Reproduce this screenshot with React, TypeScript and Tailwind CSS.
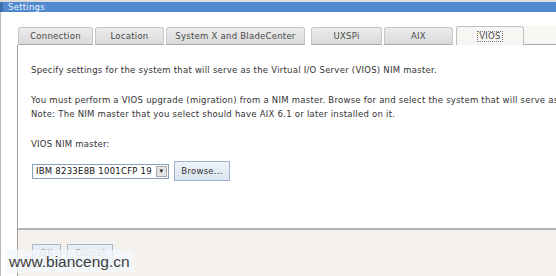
import React from "react";

const tabs = [
  { label: "Connection", w: "w-[75px]" },
  { label: "Location", w: "w-[69px]" },
  { label: "System X and BladeCenter", w: "w-[139px]" },
  { label: "UXSPi", w: "w-[71px]" },
  { label: "AIX", w: "w-[69px]" },
];

export default function App() {
  return (
    <div className="relative flex h-[276px] w-[556px] flex-col overflow-hidden bg-white font-['DejaVu_Sans',sans-serif] text-[8.5px] tracking-[0.25px] text-[#333]">
      <div className="h-[2px] bg-[#dcdcdc]" />
      <div className="flex h-[10px] items-center border-l-[3px] border-[#3d6fae] bg-[#5089d0] pl-[5px] text-[8.5px] leading-none text-[#eef4fb]">
        Settings
      </div>

      <div className="flex flex-1">
        <div className="w-[4px] border-r border-[#b8b8b8] bg-[#ececec]" />
        <div className="flex flex-1 flex-col pl-[16px]">
          <div className="h-[14px]" />

          {/* tab strip */}
          <div className="flex h-[19px] items-end">
            {tabs.map((t, i) => (
              <div
                key={t.label}
                className={`flex h-[18px] ${t.w} ${i === 3 ? "ml-[6px]" : i > 0 ? "ml-[2px]" : "ml-[1px]"} items-center justify-center rounded-t-[3px] border border-b-[#a8a8a8] border-[#c6c6c6] bg-gradient-to-b from-[#ececec] to-[#dadada] text-[8.5px] text-[#4a4a4a]`}
              >
                {t.label}
              </div>
            ))}
            <div className="ml-[3px] flex h-[19px] w-[68px] items-center justify-center rounded-t-[3px] border border-b-0 border-[#c0c0c0] bg-[#f7f6f3] text-[8.5px] text-[#4a4a4a]">
              <span className="border border-dotted border-[#777] px-[1px] leading-[9px]">VIOS</span>
            </div>
            <div className="h-[19px] flex-1 border-b border-[#a8a8a8] bg-[#f8f7f4]" />
          </div>

          {/* panel */}
          <div className="flex flex-1 flex-col border-l border-[#9e9e9e]">
            <div className="h-[183px] overflow-hidden bg-white pl-[13px] pt-[20px]">
              <p className="whitespace-nowrap leading-[10px]">
                Specify settings for the system that will serve as the Virtual I/O Server (VIOS) NIM master.
              </p>
              <p className="mt-[18px] whitespace-nowrap leading-[14px]">
                You must perform a VIOS upgrade (migration) from a NIM master. Browse for and select the system that will serve as the VIOS NIM master.
                <br />
                Note: The NIM master that you select should have AIX 6.1 or later installed on it.
              </p>
              <p className="mt-[18px] leading-[10px]">VIOS NIM master:</p>
              <div className="mt-[12px] flex items-center gap-[5px]">
                <div className="ml-[1px] flex h-[15px] w-[137px] items-center border border-[#8a9fb8] bg-white pl-[3px]">
                  <span className="flex-1 whitespace-nowrap text-[8.5px] text-[#111]">IBM 8233E8B 1001CFP 19</span>
                  <span className="mr-[1px] flex h-[11px] w-[11px] items-center justify-center border border-[#a9a9a9] bg-[#e4e4e4] text-[7px] leading-none text-[#222]">
                    ▾
                  </span>
                </div>
                <div className="flex h-[20px] w-[56px] items-center justify-center border border-[#9fb3cd] bg-gradient-to-b from-[#eef3f9] to-[#d9e4f1] text-[8.5px] text-[#333]">
                  Browse...
                </div>
              </div>
            </div>

            {/* footer */}
            <div className="flex flex-1 gap-[6px] border-t-2 border-[#b4b4b4] bg-[#f5f2ee] pl-[14px] pt-[14px]">
              <div className="flex h-[19px] w-[29px] items-center justify-center border border-[#a3b6cf] bg-gradient-to-b from-[#eaf0f7] to-[#d6e1ee] text-[8.5px] text-[#9a9a9a]">
                OK
              </div>
              <div className="flex h-[19px] w-[46px] items-center justify-center border border-[#a3b6cf] bg-gradient-to-b from-[#eaf0f7] to-[#d6e1ee] text-[8.5px] text-[#9a9a9a]">
                Cancel
              </div>
            </div>
          </div>
        </div>
      </div>

      {/* watermark */}
      <div className="absolute left-[6px] top-[250px] flex h-[23px] w-[128px] items-center bg-[#f4f8fb]/80 pl-[3px] font-['Liberation_Sans',sans-serif] text-[15.5px] leading-none tracking-normal text-[#3c3c3c]">
        www.bianceng.cn
      </div>
    </div>
  );
}
